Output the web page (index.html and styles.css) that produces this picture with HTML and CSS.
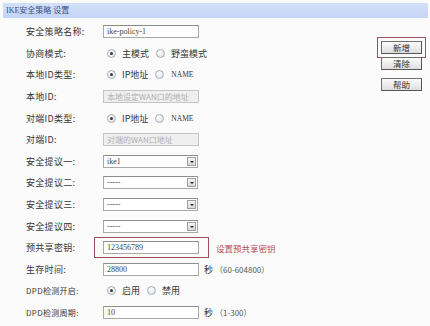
FILE: index.html
```html
<!DOCTYPE html>
<html lang="zh">
<head>
<meta charset="utf-8">
<link rel="stylesheet" href="styles.css">
</head>
<body>
<div class="page">
  <div class="title">IKE安全策略 设置</div>
  <div class="main">
    <div class="form">
      <div class="row"><span class="label">安全策略名称:</span><span class="input">ike-policy-1</span></div>
      <div class="row"><span class="label">协商模式:</span>
        <span class="radio on"></span><span class="opt">主模式</span>
        <span class="radio"></span><span class="opt">野蛮模式</span></div>
      <div class="row"><span class="label">本地ID类型:</span>
        <span class="radio on"></span><span class="opt">IP地址</span>
        <span class="radio"></span><span class="opt small">NAME</span></div>
      <div class="row"><span class="label">本地ID:</span><span class="input disabled">本地设定WAN口的地址</span></div>
      <div class="row"><span class="label">对端ID类型:</span>
        <span class="radio on"></span><span class="opt">IP地址</span>
        <span class="radio"></span><span class="opt small">NAME</span></div>
      <div class="row"><span class="label">对端ID:</span><span class="input disabled">对端的WAN口地址</span></div>
      <div class="row"><span class="label">安全提议一:</span><span class="select"><span class="val">ike1</span><span class="arrow"></span></span></div>
      <div class="row"><span class="label">安全提议二:</span><span class="select"><span class="val">-----</span><span class="arrow"></span></span></div>
      <div class="row"><span class="label">安全提议三:</span><span class="select"><span class="val">-----</span><span class="arrow"></span></span></div>
      <div class="row"><span class="label">安全提议四:</span><span class="select"><span class="val">-----</span><span class="arrow"></span></span></div>
      <div class="row"><span class="label">预共享密钥:</span><span class="mark"><span class="input">123456789</span></span><span class="note">设置预共享密钥</span></div>
      <div class="row"><span class="label">生存时间:</span><span class="input">28800</span><span class="unit">秒</span><span class="range">（60-604800）</span></div>
      <div class="row"><span class="label dpd">DPD检测开启:</span>
        <span class="radio on"></span><span class="opt">启用</span>
        <span class="radio"></span><span class="opt">禁用</span></div>
      <div class="row"><span class="label dpd">DPD检测周期:</span><span class="input">10</span><span class="unit">秒</span><span class="range">（1-300）</span></div>
    </div>
    <div class="buttons">
      <span class="btn marked">新增</span>
      <span class="btn">清除</span>
      <span class="btn gap">帮助</span>
    </div>
  </div>
</div>
</body>
</html>
```
FILE: styles.css
```css
html, body {
  margin: 0;
  padding: 0;
  background: #fbfbfb;
}
body {
  width: 430px;
  height: 326px;
  overflow: hidden;
  font-family: "Noto Sans CJK SC", "Noto Sans", sans-serif;
  font-size: 9px;
  color: #363636;
}
.page {
  padding: 3px 2px 0 3px;
}
.title {
  height: 15px;
  line-height: 15px;
  background: linear-gradient(#d3e0fa, #c3d4f6);
  color: #3c4f85;
  padding-left: 3px;
  font-size: 8px;
  font-family: "Liberation Serif", "Noto Sans CJK SC", serif;
}
.main {
  display: flex;
  padding-top: 3px;
}
.form {
  flex: 1;
  display: grid;
  grid-auto-rows: 21.6px;
}
.row {
  display: flex;
  align-items: center;
}
.label {
  width: 77px;
  padding-left: 23px;
  flex: none;
  letter-spacing: 0.3px;
}
.label.dpd {
  font-size: 8px;
}
.input {
  width: 91px;
  height: 11px;
  line-height: 11px;
  border: 1px solid #a8a8a8;
  border-top-color: #8c8c8c;
  background: #fff;
  padding-left: 3px;
  font-size: 8px;
  color: #444;
  font-family: "Liberation Serif", "Noto Sans CJK SC", serif;
  white-space: nowrap;
  overflow: hidden;
}
.input.disabled {
  background: #efefef;
  color: #b0b0b0;
  border-color: #c4c4c4;
  font-family: "Noto Sans CJK SC", sans-serif;
}
.mark {
  position: relative;
  display: flex;
}
.mark::after {
  content: "";
  position: absolute;
  left: -9px;
  right: -10px;
  top: -4px;
  bottom: -4px;
  border: 1px solid #9b5060;
}
.note {
  margin-left: 17px;
  color: #b84a5c;
  font-size: 8.5px;
}
.unit {
  margin-left: 5px;
}
.range {
  margin-left: 2px;
  font-size: 8px;
  color: #555;
}
.radio {
  width: 7px;
  height: 7px;
  border-radius: 50%;
  border: 1px solid #a9b0b8;
  background: radial-gradient(circle at 40% 35%, #ffffff, #d6dbe0);
  margin-left: 4px;
  position: relative;
  flex: none;
}
.radio.on::after {
  content: "";
  position: absolute;
  left: 2px;
  top: 2px;
  width: 3px;
  height: 3px;
  border-radius: 50%;
  background: #2e3a4a;
}
.radio + .opt {
  margin-left: 6px;
}
.opt {
  margin-right: 7px;
}
.opt + .radio {
  margin-left: 0;
}
.opt.small {
  font-size: 7.5px;
  font-family: "Liberation Serif", serif;
  margin-left: 7px;
}
.select {
  width: 89px;
  height: 11px;
  border: 1px solid #a8a8a8;
  border-top-color: #8c8c8c;
  background: #fff;
  display: flex;
  align-items: center;
  justify-content: space-between;
  padding: 0 1px 0 3px;
  font-size: 8px;
  font-family: "Liberation Serif", serif;
  color: #444;
}
.arrow {
  width: 9px;
  height: 9px;
  border: 1px solid #a0a0a0;
  background: linear-gradient(#f4f4f4, #d8d8d8);
  position: relative;
  box-sizing: border-box;
}
.arrow::after {
  content: "";
  position: absolute;
  left: 2px;
  top: 3px;
  border-left: 2px solid transparent;
  border-right: 2px solid transparent;
  border-top: 2px solid #222;
}
.buttons {
  width: 52px;
  display: flex;
  flex-direction: column;
  align-items: flex-start;
  padding-top: 20px;
  padding-left: 2px;
}
.btn {
  width: 39px;
  height: 11px;
  line-height: 11px;
  border: 1px solid #6f6f6f;
  border-right-color: #555;
  border-bottom-color: #555;
  background: linear-gradient(#fbfbfb, #dedede);
  text-align: center;
  font-size: 8.5px;
  color: #333;
  margin-left: 5px;
  margin-bottom: 2px;
}
.btn.marked {
  outline: 1px solid #9b5060;
  outline-offset: 3px;
  margin-bottom: 3px;
}
.btn.gap {
  margin-top: 6px;
}
```
